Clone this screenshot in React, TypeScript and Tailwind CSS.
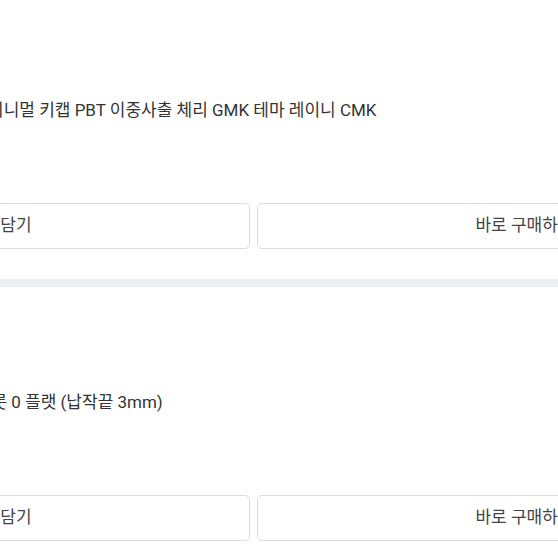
import React from "react";

interface CartItem {
  id: number;
  title: string;
}

const items: CartItem[] = [
  { id: 1, title: "미니멀 키캡 PBT 이중사출 체리 GMK 테마 레이니 CMK" },
  { id: 2, title: "드라이버 슬룻 0 플랫 (납작끝 3mm)" },
];

const font = {
  fontFamily: '"Roboto", "Noto Sans CJK KR", sans-serif',
};

const ItemSection: React.FC<{ item: CartItem; first: boolean }> = ({
  item,
  first,
}) => {
  return (
    <div>
      <div className={first ? "pt-[100px]" : "pt-[105px]"}>
        <p
          className={`text-[17px] leading-[20px] text-[#333] whitespace-nowrap ${
            item.id === 1 ? "pl-[273px]" : "pl-[194px]"
          }`}
        >
          {item.title}
        </p>
      </div>

      <div className="mt-[83px] flex gap-[7px] pb-[30px]">
        <button className="flex-1 h-[46px] rounded-[5px] border border-[#dcdcdc] bg-white text-[17px] text-[#444]">
          장바구니 담기
        </button>
        <button className="flex-1 h-[46px] rounded-[5px] border border-[#dcdcdc] bg-white text-[17px] text-[#444]">
          바로 구매하기
        </button>
      </div>
    </div>
  );
};

const App: React.FC = () => {
  return (
    <div className="w-[558px] h-[558px] overflow-hidden bg-white" style={font}>
      <div className="w-[1077px] -ml-[285px]">
        {items.map((item, i) => (
          <React.Fragment key={item.id}>
            <ItemSection item={item} first={i === 0} />
            <div className="h-[8px] bg-[#edf0f2]" />
          </React.Fragment>
        ))}
      </div>
    </div>
  );
};

export default App;
